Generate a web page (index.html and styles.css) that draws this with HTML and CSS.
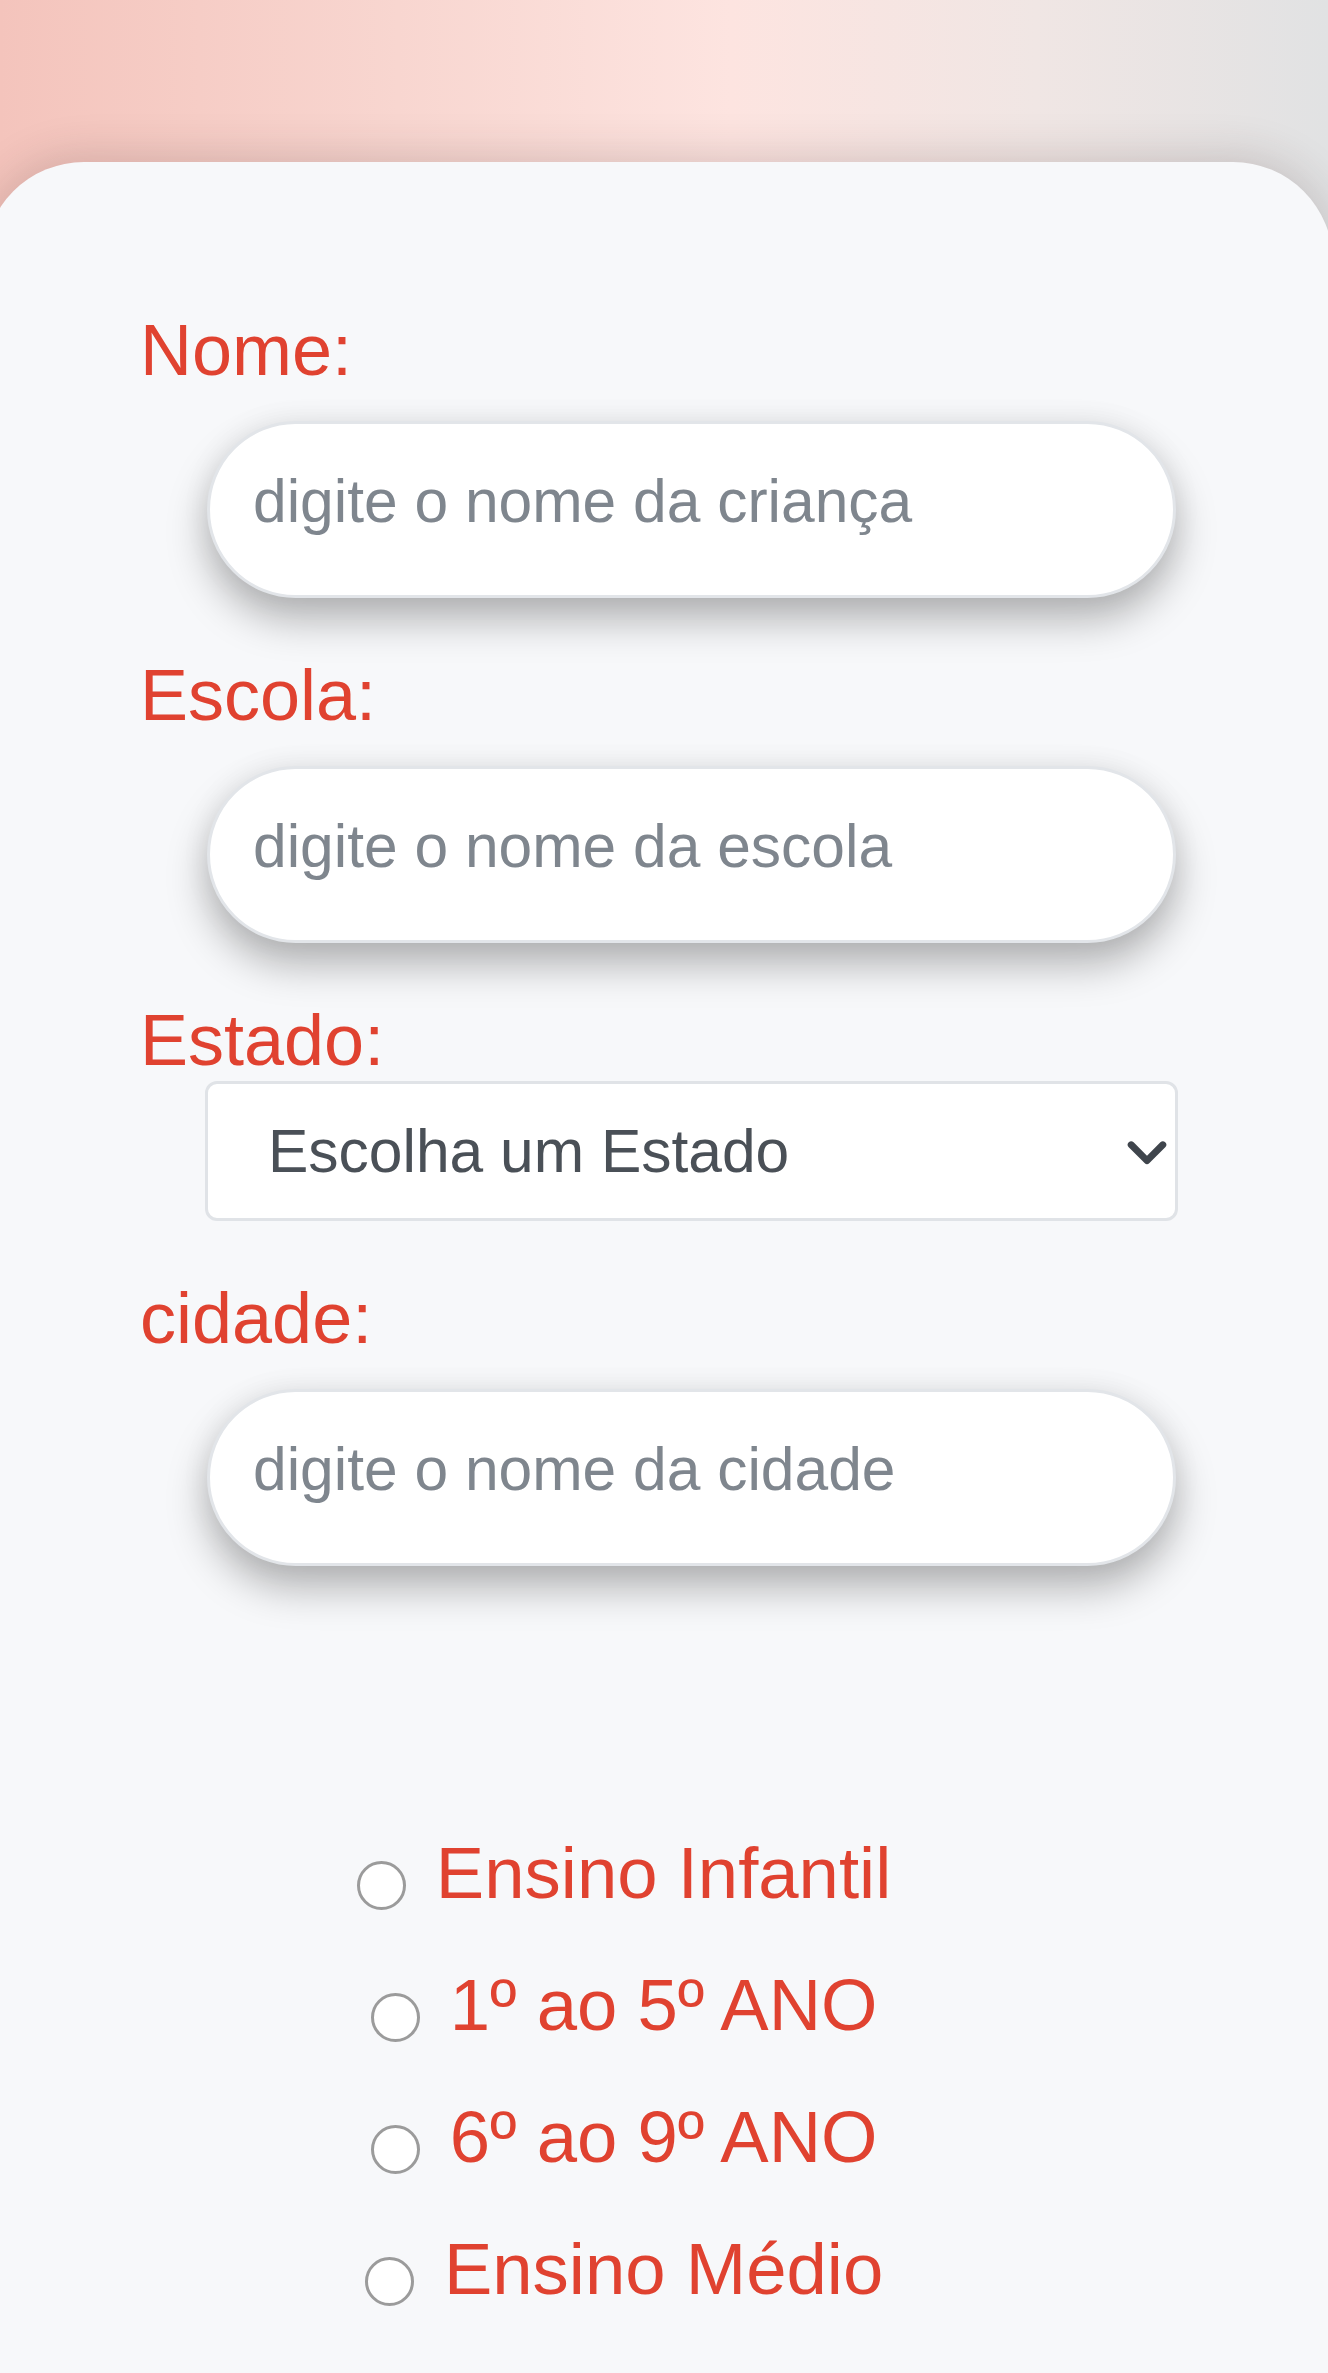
FILE: index.html
```html
<!DOCTYPE html>
<html lang="pt-BR">
<head>
<meta charset="utf-8">
<title>Cadastro</title>
<link rel="stylesheet" href="styles.css">
</head>
<body>
<div class="page">
  <main class="card">
    <form class="form">
      <label class="field-label first" for="nome">Nome:</label>
      <input class="pill-input" id="nome" type="text" placeholder="digite o nome da criança">

      <label class="field-label" for="escola">Escola:</label>
      <input class="pill-input" id="escola" type="text" placeholder="digite o nome da escola">

      <label class="field-label" for="estado">Estado:</label>
      <div class="select-wrap">
        <select class="state-select" id="estado">
          <option>Escolha um Estado</option>
        </select>
        <svg class="chevron" viewBox="0 0 16 16" width="46" height="46" aria-hidden="true">
          <path d="M2.5 5.5l5.5 5.5 5.5-5.5" fill="none" stroke="#3f454c" stroke-width="2.4" stroke-linecap="round" stroke-linejoin="round"/>
        </svg>
      </div>

      <label class="field-label" for="cidade">cidade:</label>
      <input class="pill-input" id="cidade" type="text" placeholder="digite o nome da cidade">

      <div class="levels">
        <div class="level"><input class="radio" type="radio" name="nivel" id="n1"> <label for="n1">Ensino Infantil</label></div>
        <div class="level"><input class="radio" type="radio" name="nivel" id="n2"> <label for="n2">1º ao 5º ANO</label></div>
        <div class="level"><input class="radio" type="radio" name="nivel" id="n3"> <label for="n3">6º ao 9º ANO</label></div>
        <div class="level"><input class="radio" type="radio" name="nivel" id="n4"> <label for="n4">Ensino Médio</label></div>
      </div>
    </form>
  </main>
</div>
</body>
</html>
```

FILE: styles.css
```css
html, body {
  margin: 0;
  padding: 0;
}

body {
  font-family: "Liberation Sans", Arial, sans-serif;
  overflow: hidden;
}

.page {
  min-height: 2373px;
  background: linear-gradient(90deg, #f4c4bc 0%, #f8d6d0 30%, #fde4e0 55%, #f0e6e4 78%, #e1e2e3 100%);
  display: flex;
  flex-direction: column;
}

.card {
  flex: 1;
  margin: 162px -5px 0 -16px;
  background: #f7f8fa;
  border-radius: 100px 100px 0 0;
  box-shadow: 0 -6px 44px rgba(60, 40, 40, 0.18);
  padding: 148px 0 0 156px;
}

.form {
  display: flex;
  flex-direction: column;
  align-items: flex-start;
}

.field-label {
  display: block;
  font-size: 72px;
  line-height: 80px;
  color: #e04230;
  margin-top: 57px;
}

.field-label.first {
  margin-top: 0;
}

.pill-input {
  box-sizing: border-box;
  margin: 31px 0 0 67px;
  width: 969px;
  height: 177px;
  padding: 0 40px 18px 43px;
  border: 3px solid #e2e5e9;
  border-radius: 90px;
  background: #fff;
  font-family: "Liberation Sans", Arial, sans-serif;
  font-size: 60.5px;
  color: #333;
  box-shadow: 0 22px 40px rgba(0, 0, 0, 0.28), 0 0 30px rgba(0, 0, 0, 0.06);
  outline: none;
}

.pill-input::placeholder {
  color: #7f868e;
}

.select-wrap {
  position: relative;
  margin: 1px 0 0 65px;
  width: 973px;
  height: 140px;
}

.state-select {
  -webkit-appearance: none;
  appearance: none;
  box-sizing: border-box;
  width: 100%;
  height: 100%;
  padding: 0 80px 0 60px;
  border: 3px solid #e0e3e7;
  border-radius: 12px;
  background: #fff;
  font-family: "Liberation Sans", Arial, sans-serif;
  font-size: 60.5px;
  color: #4a5057;
  outline: none;
}

.chevron {
  position: absolute;
  right: 8px;
  top: 48px;
  pointer-events: none;
}

.levels {
  margin-top: 266px;
  width: 968px;
  text-align: center;
}

.level {
  font-size: 72.5px;
  line-height: 82px;
  color: #e04230;
  margin-bottom: 50px;
  white-space: nowrap;
}

.radio {
  -webkit-appearance: none;
  appearance: none;
  box-sizing: border-box;
  width: 49px;
  height: 49px;
  margin: 0 10px 0 0;
  border: 3px solid #9b9b9b;
  border-radius: 50%;
  background: #fff;
  vertical-align: -12px;
}
```
